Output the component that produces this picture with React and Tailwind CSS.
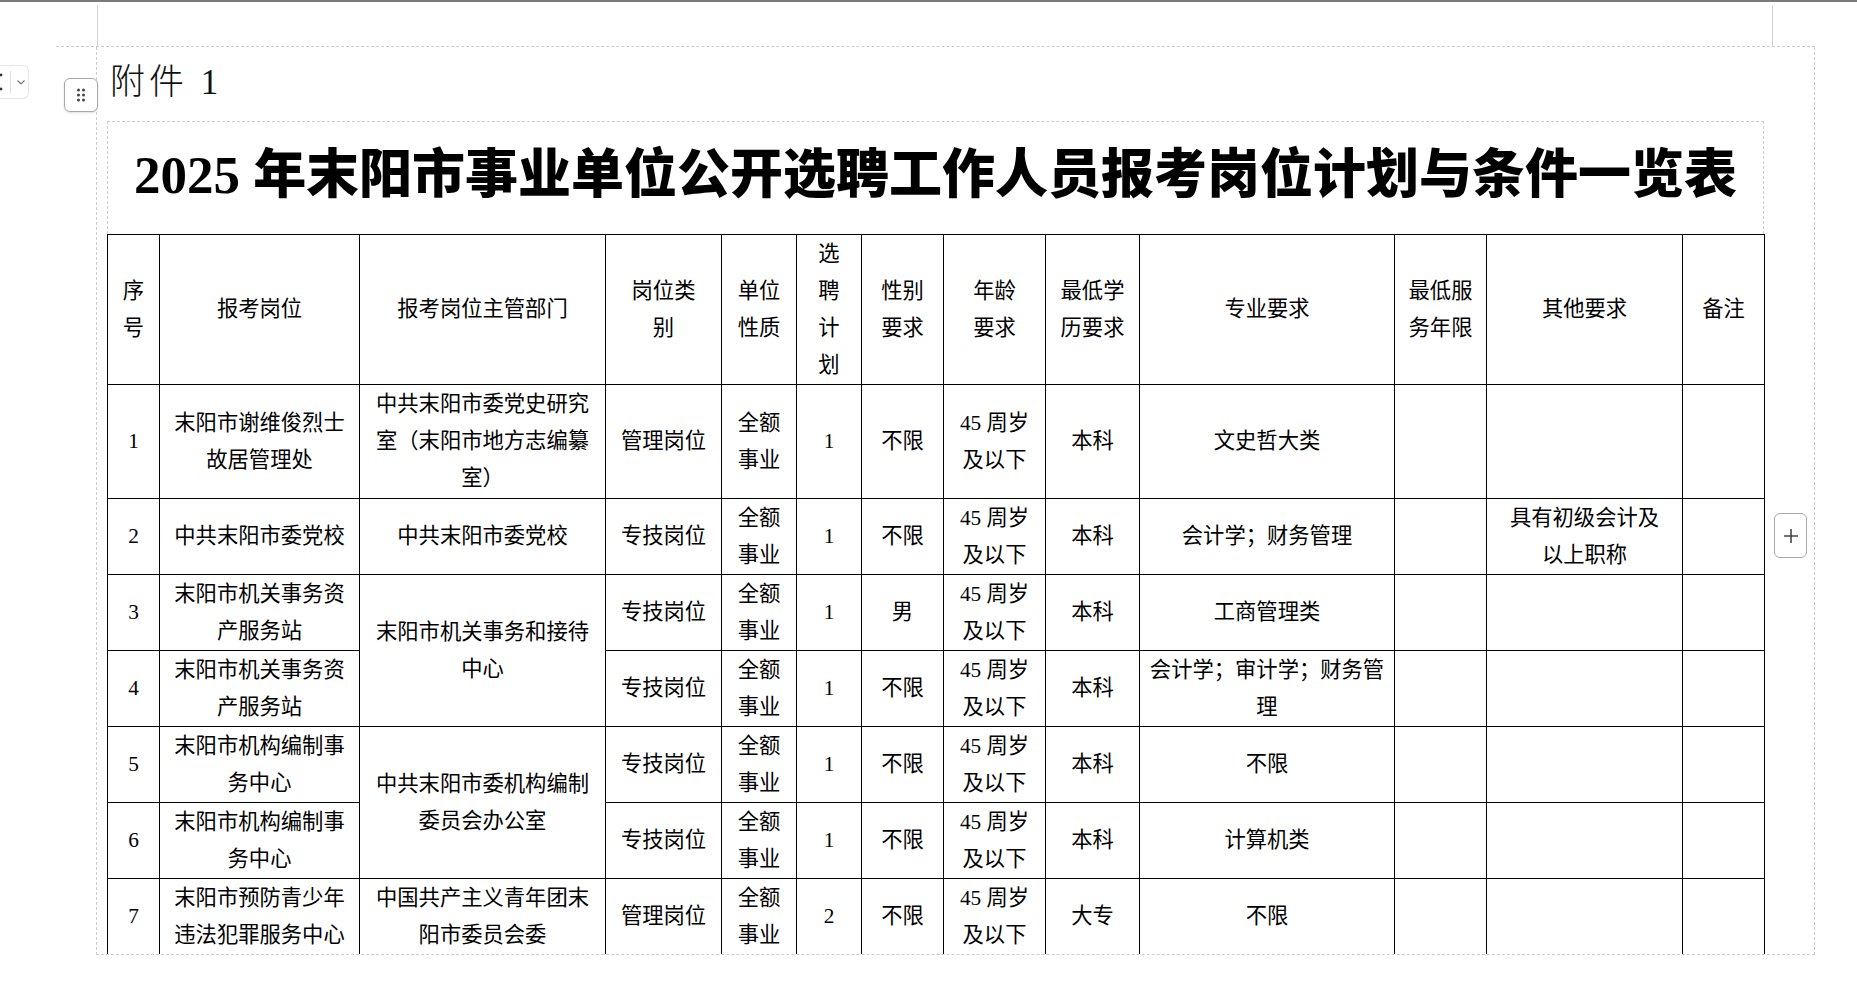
const SERIF = "font-['Liberation_Serif','Noto_Sans_CJK_SC',serif]";

const widths = [52, 200, 246, 116, 75, 65, 82, 102, 94, 255, 92, 196, 82];

const header = [
  ["序", "号"],
  ["报考岗位"],
  ["报考岗位主管部门"],
  ["岗位类", "别"],
  ["单位", "性质"],
  ["选", "聘", "计", "划"],
  ["性别", "要求"],
  ["年龄", "要求"],
  ["最低学", "历要求"],
  ["专业要求"],
  ["最低服", "务年限"],
  ["其他要求"],
  ["备注"],
];

const age = ["45 周岁", "及以下"];
const full = ["全额", "事业"];

// null = covered by a rowspan above
const rows = [
  {
    h: "h-[114px]",
    cells: [
      ["1"],
      ["末阳市谢维俊烈士", "故居管理处"],
      ["中共末阳市委党史研究", "室（末阳市地方志编纂", "室）"],
      ["管理岗位"], full, ["1"], ["不限"], age, ["本科"], ["文史哲大类"], [], [], [],
    ],
  },
  {
    h: "h-[76px]",
    cells: [
      ["2"],
      ["中共末阳市委党校"],
      ["中共末阳市委党校"],
      ["专技岗位"], full, ["1"], ["不限"], age, ["本科"], ["会计学；财务管理"], [],
      ["具有初级会计及", "以上职称"], [],
    ],
  },
  {
    h: "h-[76px]",
    cells: [
      ["3"],
      ["末阳市机关事务资", "产服务站"],
      { span: 2, lines: ["末阳市机关事务和接待", "中心"] },
      ["专技岗位"], full, ["1"], ["男"], age, ["本科"], ["工商管理类"], [], [], [],
    ],
  },
  {
    h: "h-[76px]",
    cells: [
      ["4"],
      ["末阳市机关事务资", "产服务站"],
      null,
      ["专技岗位"], full, ["1"], ["不限"], age, ["本科"], ["会计学；审计学；财务管", "理"], [], [], [],
    ],
  },
  {
    h: "h-[76px]",
    cells: [
      ["5"],
      ["末阳市机构编制事", "务中心"],
      { span: 2, lines: ["中共末阳市委机构编制", "委员会办公室"] },
      ["专技岗位"], full, ["1"], ["不限"], age, ["本科"], ["不限"], [], [], [],
    ],
  },
  {
    h: "h-[76px]",
    cells: [
      ["6"],
      ["末阳市机构编制事", "务中心"],
      null,
      ["专技岗位"], full, ["1"], ["不限"], age, ["本科"], ["计算机类"], [], [], [],
    ],
  },
  {
    h: "h-[76px]",
    last: true,
    cells: [
      ["7"],
      ["末阳市预防青少年", "违法犯罪服务中心"],
      ["中国共产主义青年团末", "阳市委员会委"],
      ["管理岗位"], full, ["2"], ["不限"], age, ["大专"], ["不限"], [], [], [],
    ],
  },
];

function Lines({ lines }) {
  return lines.map((line, i) => (
    <div key={i} className="whitespace-nowrap">
      {line}
    </div>
  ));
}

function GripIcon() {
  return (
    <svg width="12" height="16" viewBox="0 0 12 16" fill="#444">
      <circle cx="3.5" cy="3" r="1.5" />
      <circle cx="8.5" cy="3" r="1.5" />
      <circle cx="3.5" cy="8" r="1.5" />
      <circle cx="8.5" cy="8" r="1.5" />
      <circle cx="3.5" cy="13" r="1.5" />
      <circle cx="8.5" cy="13" r="1.5" />
    </svg>
  );
}

export default function App() {
  return (
    <div className="relative h-[983px] w-[1857px] overflow-hidden bg-white">
      <div className="h-[2px] bg-[#7a7a7a]" />
      <div className="ml-[97px] mt-[3px] h-[41px] w-[1676px] border-x border-[#d2d2d2]" />

      <div className="flex">
        <div className="w-[56px] pt-[19px]">
          <div className="flex h-[34px] w-[29px] items-center rounded-r-md border border-l-0 border-[#e6e6e6] bg-white">
            <svg width="4" height="24" viewBox="0 0 4 24" fill="#333">
              <circle cx="1" cy="5" r="1.4" />
              <circle cx="1" cy="19" r="1.4" />
            </svg>
            <div className="ml-[6px] h-[22px] w-px bg-[#dedede]" />
            <svg width="12" height="12" viewBox="0 0 12 12" className="ml-[4px]" fill="none" stroke="#777" strokeWidth="1.2">
              <path d="M2.5 4.5 L6 8 L9.5 4.5" />
            </svg>
          </div>
        </div>

        <div className="w-[1759px] border-t border-dashed border-[#cdcdcd]">
          <div className="flex">
            <div className="relative z-10 w-[40px] pt-[31px]">
              <div className="ml-[8px] flex h-[34px] w-[34px] items-center justify-center rounded-md border border-[#a9a9a9] bg-white shadow-sm">
                <GripIcon />
              </div>
            </div>

            <div className="relative h-[908px] w-[1719px] overflow-hidden border-x border-b border-dashed border-[#cdcdcd] pl-[10px] pt-[16px]">
              <div className={`${SERIF} ml-[3px] h-[40px] text-[35px] font-light leading-[40px] tracking-[4px] text-[#111]`}>
                附件 1
              </div>

              <div className="mt-[18px] flex h-[113px] w-[1657px] items-center justify-center border border-b-0 border-dashed border-[#cdcdcd] pb-[6px]">
                <h1 className={`${SERIF} whitespace-nowrap text-[53px] font-black leading-none text-black`}>
                  2025 年末阳市事业单位公开选聘工作人员报考岗位计划与条件一览表
                </h1>
              </div>

              <table className={`${SERIF} w-[1657px] table-fixed border-collapse text-center text-[21.3px] leading-[37px] text-black`}>
                <colgroup>
                  {widths.map((w, i) => (
                    <col key={i} style={{ width: w }} />
                  ))}
                </colgroup>
                <thead>
                  <tr className="h-[150px]">
                    {header.map((lines, i) => (
                      <th key={i} className="border border-black px-[6px] align-middle font-normal">
                        <Lines lines={lines} />
                      </th>
                    ))}
                  </tr>
                </thead>
                <tbody>
                  {rows.map((row, r) => (
                    <tr key={r} className={row.h}>
                      {row.cells.map((cell, c) => {
                        if (cell === null) return null;
                        const span = Array.isArray(cell) ? 1 : cell.span;
                        const lines = Array.isArray(cell) ? cell : cell.lines;
                        return (
                          <td
                            key={c}
                            rowSpan={span}
                            className={`border border-black px-[6px] align-middle ${row.last ? "border-b-0" : ""}`}
                          >
                            <Lines lines={lines} />
                          </td>
                        );
                      })}
                    </tr>
                  ))}
                </tbody>
              </table>

              <button
                type="button"
                className="absolute left-[1677px] top-[466px] flex h-[45px] w-[33px] items-center justify-center rounded-md border border-[#a9a9a9] bg-white"
              >
                <svg width="18" height="18" viewBox="0 0 18 18" stroke="#444" strokeWidth="1.6">
                  <path d="M9 2 V16 M2 9 H16" />
                </svg>
              </button>
            </div>
          </div>
        </div>
      </div>
    </div>
  );
}
